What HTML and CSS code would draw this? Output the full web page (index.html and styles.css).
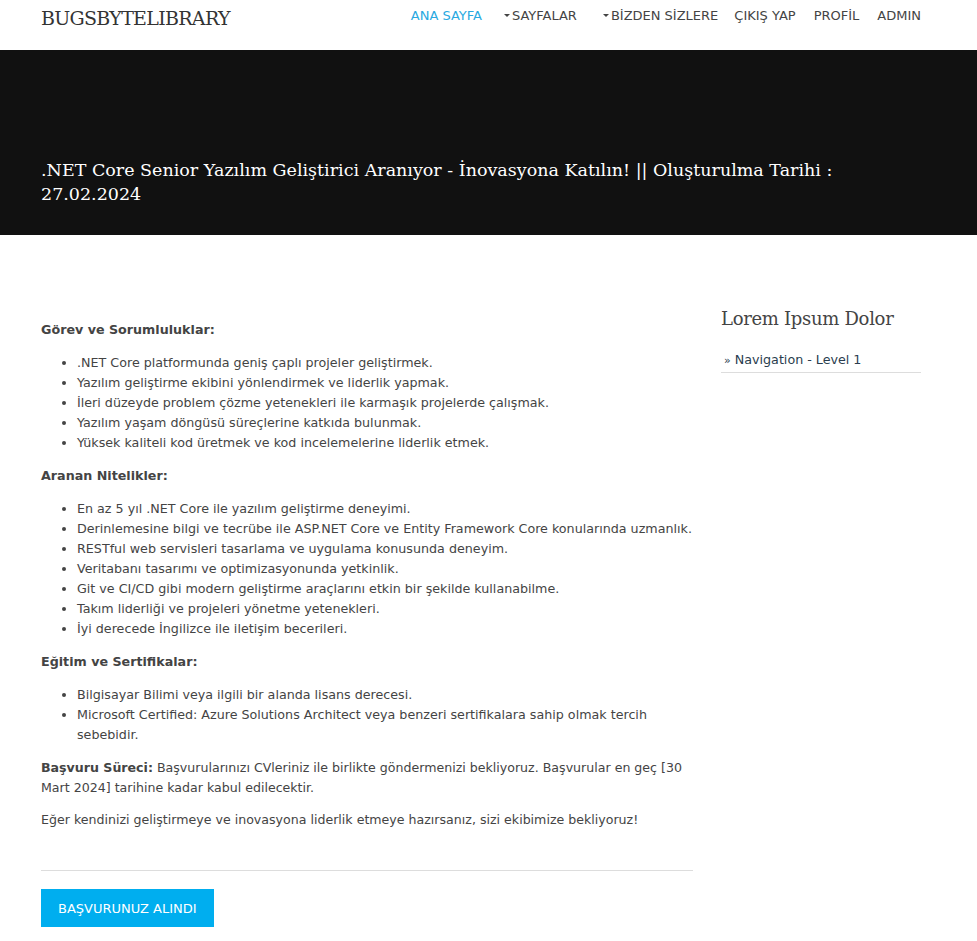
FILE: index.html
```html
<!DOCTYPE html>
<html lang="tr">
<head>
<meta charset="utf-8">
<title>BugsByteLibrary</title>
<link rel="stylesheet" href="styles.css">
</head>
<body>
<header class="topbar">
  <div class="logo">BUGSBYTELIBRARY</div>
  <nav class="menu">
    <a class="menu-item active">ANA SAYFA</a>
    <a class="menu-item drop drop-1"><span class="caret"></span>SAYFALAR</a>
    <a class="menu-item drop drop-2"><span class="caret"></span>BİZDEN SİZLERE</a>
    <a class="menu-item exit">ÇIKIŞ YAP</a>
    <a class="menu-item">PROFİL</a>
    <a class="menu-item">ADMIN</a>
  </nav>
</header>
<section class="banner">
  <h1 class="banner-title">.NET Core Senior Yazılım Geliştirici Aranıyor - İnovasyona Katılın! || Oluşturulma Tarihi : 27.02.2024</h1>
</section>
<main class="content">
  <article class="main-col">
    <p class="sec-title"><strong>Görev ve Sorumluluklar:</strong></p>
    <ul class="list">
      <li>.NET Core platformunda geniş çaplı projeler geliştirmek.</li>
      <li>Yazılım geliştirme ekibini yönlendirmek ve liderlik yapmak.</li>
      <li>İleri düzeyde problem çözme yetenekleri ile karmaşık projelerde çalışmak.</li>
      <li>Yazılım yaşam döngüsü süreçlerine katkıda bulunmak.</li>
      <li>Yüksek kaliteli kod üretmek ve kod incelemelerine liderlik etmek.</li>
    </ul>
    <p class="sec-title"><strong>Aranan Nitelikler:</strong></p>
    <ul class="list">
      <li>En az 5 yıl .NET Core ile yazılım geliştirme deneyimi.</li>
      <li>Derinlemesine bilgi ve tecrübe ile ASP.NET Core ve Entity Framework Core konularında uzmanlık.</li>
      <li>RESTful web servisleri tasarlama ve uygulama konusunda deneyim.</li>
      <li>Veritabanı tasarımı ve optimizasyonunda yetkinlik.</li>
      <li>Git ve CI/CD gibi modern geliştirme araçlarını etkin bir şekilde kullanabilme.</li>
      <li>Takım liderliği ve projeleri yönetme yetenekleri.</li>
      <li>İyi derecede İngilizce ile iletişim becerileri.</li>
    </ul>
    <p class="sec-title"><strong>Eğitim ve Sertifikalar:</strong></p>
    <ul class="list">
      <li>Bilgisayar Bilimi veya ilgili bir alanda lisans derecesi.</li>
      <li>Microsoft Certified: Azure Solutions Architect veya benzeri sertifikalara sahip olmak tercih sebebidir.</li>
    </ul>
    <p class="para"><strong>Başvuru Süreci:</strong> Başvurularınızı CVleriniz ile birlikte göndermenizi bekliyoruz. Başvurular en geç [30 Mart 2024] tarihine kadar kabul edilecektir.</p>
    <p class="para">Eğer kendinizi geliştirmeye ve inovasyona liderlik etmeye hazırsanız, sizi ekibimize bekliyoruz!</p>
    <hr class="divider">
    <button class="btn">BAŞVURUNUZ ALINDI</button>
  </article>
  <aside class="sidebar">
    <h3 class="side-title">Lorem Ipsum Dolor</h3>
    <ul class="side-nav">
      <li><span class="raquo">»</span> Navigation - Level 1</li>
    </ul>
  </aside>
</main>
</body>
</html>
```
FILE: styles.css
```css
html, body {
  margin: 0;
  padding: 0;
  background: #fff;
}
body {
  font-family: "DejaVu Sans", Verdana, sans-serif;
  font-size: 12.7px;
  color: #444;
}
.topbar {
  height: 50px;
  display: flex;
  justify-content: space-between;
  align-items: flex-start;
  padding: 0 56px 0 41px;
}
.logo {
  font-family: "DejaVu Serif", Georgia, serif;
  font-size: 19px;
  color: #333;
  padding-top: 7px;
  letter-spacing: -0.7px;
}
.menu {
  display: flex;
  padding-top: 8px;
}
.menu-item {
  font-size: 13px;
  color: #444;
  margin-left: 18px;
  display: flex;
  align-items: center;
}
.menu-item.active {
  color: #29a9e1;
  margin-left: 0;
}
.menu-item.drop-1 {
  margin-left: 22px;
}
.menu-item.drop-2 {
  margin-left: 26px;
}
.menu-item.exit {
  margin-left: 16px;
}
.caret {
  width: 0;
  height: 0;
  border-left: 3px solid transparent;
  border-right: 3px solid transparent;
  border-top: 3px solid #444;
  margin-right: 2px;
}
.banner {
  background: #111;
  height: 185px;
  padding: 0 41px 29px;
  display: flex;
  align-items: flex-end;
  box-sizing: border-box;
}
.banner-title {
  margin: 0;
  color: #fff;
  font-family: "DejaVu Serif", Georgia, serif;
  font-weight: normal;
  font-size: 17.5px;
  line-height: 24px;
}
.content {
  display: flex;
  padding: 75px 56px 20px 41px;
  gap: 28px;
}
.main-col {
  width: 652px;
  flex: none;
}
.sec-title {
  margin: 10px 0 13px;
  line-height: 20px;
  color: #444;
}
.list {
  margin: 0 -8px 13px 0;
  padding-left: 36px;
  line-height: 20px;
}
.para {
  margin: 0 0 12px;
  line-height: 20px;
  font-size: 12.6px;
}
.divider {
  border: none;
  border-top: 1px solid #ddd;
  margin: 40px 0 18px;
}
.btn {
  background: #00aeef;
  color: #fff;
  border: none;
  font-family: "DejaVu Sans", Verdana, sans-serif;
  font-size: 13px;
  height: 38px;
  padding: 0 17px;
  display: block;
}
.sidebar {
  width: 200px;
  flex: none;
  margin-top: -2px;
}
.side-title {
  font-family: "DejaVu Serif", Georgia, serif;
  font-weight: normal;
  font-size: 18px;
  color: #444;
  margin: 0 0 22px;
  letter-spacing: -0.3px;
}
.side-nav {
  list-style: none;
  margin: 0;
  padding: 0;
}
.side-nav li {
  border-bottom: 1px solid #ddd;
  padding: 0 0 2px 3px;
  line-height: 18px;
  color: #2a3d4e;
}
.raquo {
  font-size: 11px;
}
```
